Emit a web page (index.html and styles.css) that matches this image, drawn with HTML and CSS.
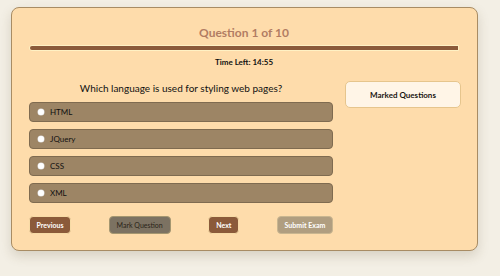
FILE: index.html
```html
<!DOCTYPE html>
<html>
<head>
<meta charset="utf-8">
<link rel="stylesheet" href="styles.css">
</head>
<body>
<div class="card">
  <div class="title">Question 1 of 10</div>
  <div class="progress"><div class="fill" style="width:100%"></div></div>
  <div class="timer">Time Left: 14:55</div>
  <div class="main">
    <div class="left">
      <div class="question">Which language is used for styling web pages?</div>
      <div class="options">
        <label class="option"><span class="radio"></span><span>HTML</span></label>
        <label class="option"><span class="radio"></span><span>JQuery</span></label>
        <label class="option"><span class="radio"></span><span>CSS</span></label>
        <label class="option"><span class="radio"></span><span>XML</span></label>
      </div>
      <div class="buttons">
        <button class="btn btn-brown btn-prev">Previous</button>
        <button class="btn btn-gray">Mark Question</button>
        <button class="btn btn-brown btn-next">Next</button>
        <button class="btn btn-submit">Submit Exam</button>
      </div>
    </div>
    <div class="right">
      <div class="marked">Marked Questions</div>
    </div>
  </div>
</div>
</body>
</html>
```
FILE: styles.css
```css
html, body {
  margin: 0;
  padding: 0;
}
body {
  background: #f3efe5;
  font-family: Lato, "Open Sans", sans-serif;
  padding: 7px 22px 0 11px;
  height: 276px;
  box-sizing: border-box;
}
.card {
  background: #fedcab;
  border: 1px solid #a88c64;
  border-radius: 8px;
  padding: 17px 18px 16px 17px;
  box-shadow: 0 5px 12px rgba(90, 70, 40, 0.18);
}
.title {
  text-align: center;
  font-size: 12px;
  line-height: 16px;
  font-weight: bold;
  color: #b27c63;
}
.progress {
  margin-top: 4px;
  height: 6px;
  box-sizing: border-box;
  border: 1px solid #fff1c4;
  border-radius: 4px 0 0 4px;
  background: #fedcab;
  overflow: hidden;
}
.fill {
  height: 100%;
  background: #8b5a3a;
}
.timer {
  margin-top: 6px;
  text-align: center;
  font-size: 8px;
  line-height: 10px;
  font-weight: bold;
  color: #111;
}
.main {
  margin-top: 14px;
  display: flex;
  gap: 12px;
}
.left {
  flex: 0 0 304px;
}
.question {
  text-align: center;
  font-size: 10px;
  line-height: 14px;
  color: #111;
}
.options {
  margin-top: 7px;
  display: flex;
  flex-direction: column;
  gap: 7px;
}
.option {
  height: 20px;
  box-sizing: border-box;
  border: 1px solid #7f6b50;
  border-radius: 4px;
  background: #9d8565;
  display: flex;
  align-items: center;
  padding-left: 8px;
  gap: 6px;
  font-size: 8px;
  color: #111;
}
.radio {
  width: 6px;
  height: 6px;
  border-radius: 50%;
  background: #fff;
  box-shadow: 0 0 0 0.5px #ddd;
}
.buttons {
  margin-top: 13px;
  display: flex;
  justify-content: space-between;
}
.btn {
  height: 18px;
  box-sizing: border-box;
  border-radius: 4px;
  font-family: Lato, "Open Sans", sans-serif;
  font-size: 7px;
  padding: 0;
  white-space: nowrap;
  border: 1px solid #f7dba6;
  cursor: pointer;
  text-align: center;
}
.btn-brown {
  background: #8b5a3a;
  color: #fff;
  font-weight: bold;
}
.btn-prev {
  width: 42px;
}
.btn-next {
  width: 31px;
}
.btn-gray {
  background: #7c7262;
  color: #2a2418;
  border-color: #a49670;
  width: 62px;
}
.btn-submit {
  background: #b09e80;
  color: #fff;
  font-weight: bold;
  border-color: #c9b690;
  width: 56px;
}
.right {
  flex: 0 0 116px;
}
.marked {
  height: 27px;
  box-sizing: border-box;
  background: #fff5e7;
  border: 1px solid #e6c58d;
  border-radius: 5px;
  display: flex;
  align-items: center;
  justify-content: center;
  font-size: 8px;
  font-weight: bold;
  color: #1a1410;
}
```
